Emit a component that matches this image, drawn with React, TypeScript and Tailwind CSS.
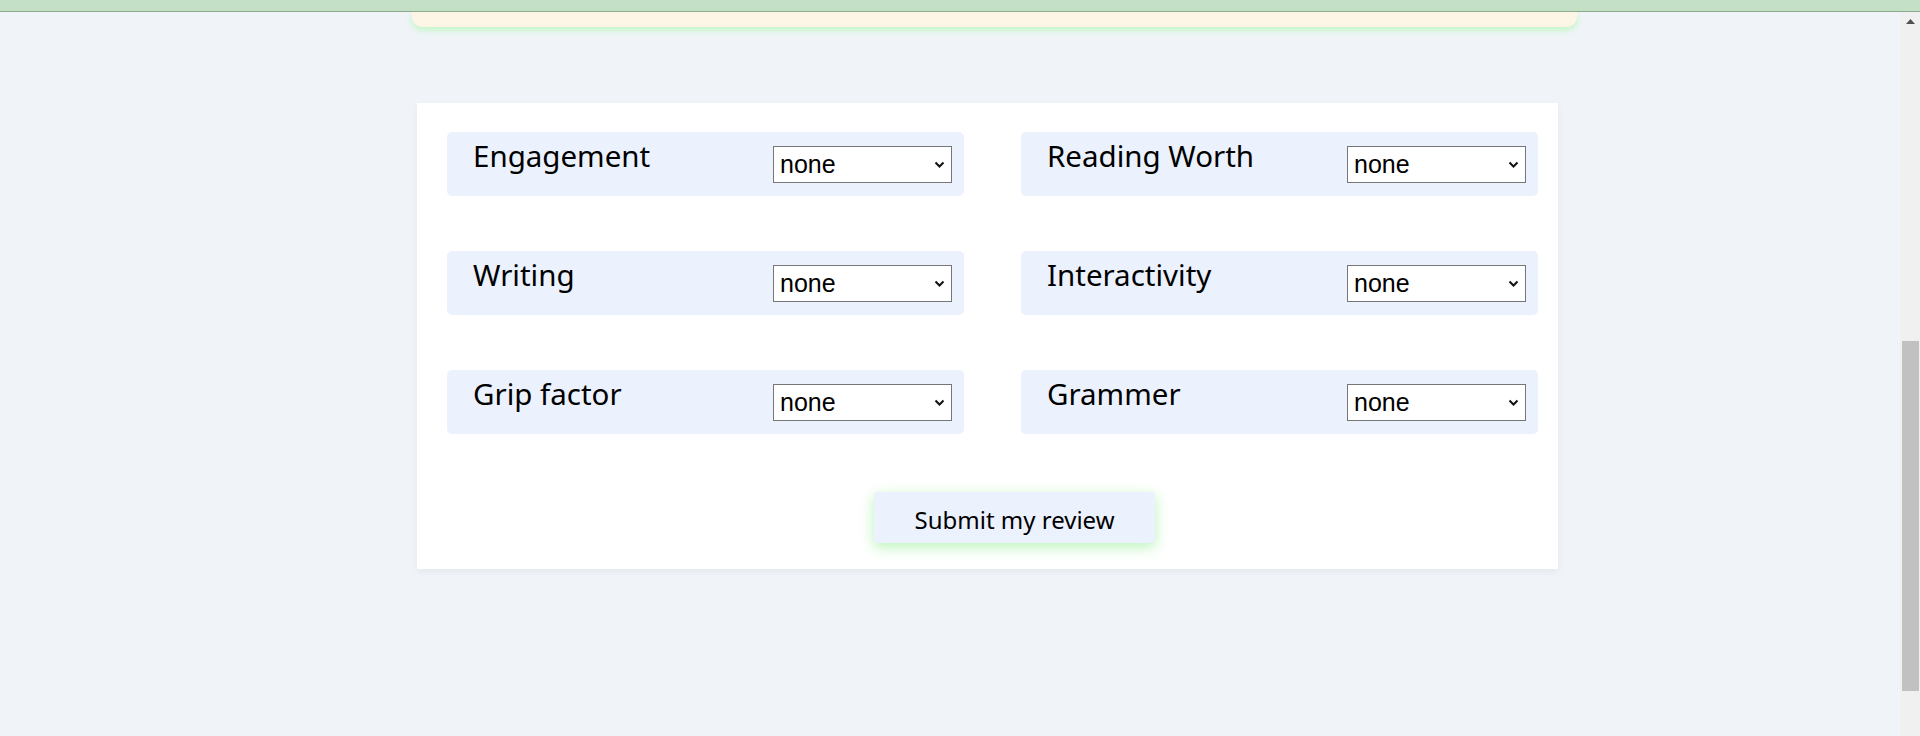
const criteria = [
  "Engagement",
  "Reading Worth",
  "Writing",
  "Interactivity",
  "Grip factor",
  "Grammer",
];

function RatingSelect({ label }: { label: string }) {
  return (
    <div className="flex h-[64px] items-center justify-between rounded-[5px] bg-[#ebf1fd] pl-[26px] pr-[12px]">
      <label className="self-start pt-[9px] font-['Noto_Sans',sans-serif] text-[29.5px] leading-none text-black">
        {label}
      </label>
      <div className="relative h-[37px] w-[179px]">
        <select
          defaultValue="none"
          className="h-full w-full appearance-none border border-[#767676] bg-white pl-[6px] font-['Liberation_Sans',Arial,sans-serif] text-[25px] leading-none text-black outline-none"
        >
          <option value="none">none</option>
          <option value="1">1</option>
          <option value="2">2</option>
          <option value="3">3</option>
          <option value="4">4</option>
          <option value="5">5</option>
        </select>
        <svg
          className="pointer-events-none absolute right-[7px] top-[15px]"
          width="11"
          height="7"
          viewBox="0 0 11 7"
        >
          <path d="M1.5 1.5l4 4 4-4" fill="none" stroke="#111" strokeWidth="2" />
        </svg>
      </div>
    </div>
  );
}

export default function App() {
  return (
    <div className="flex h-[736px] flex-col overflow-hidden bg-[#f0f4f8]">
      {/* header strip */}
      <div className="h-[12px] shrink-0 border-b border-[#8fa68f] bg-[#c4e0c6]" />

      <div className="flex min-h-0 flex-1">
        <main className="flex-1">
          {/* bottom of the card above, scrolled out of view */}
          <div className="ml-[412px] h-[15px] w-[1165px] rounded-b-[10px] bg-[#fdf5e6] shadow-[0_3px_6px_rgba(170,250,170,0.7)]" />

          <section className="ml-[417px] mt-[76px] w-[1141px] bg-white pb-[26px] pl-[30px] pr-[20px] pt-[29px] shadow-[0_3px_8px_rgba(0,0,0,0.05)]">
            <div className="grid grid-cols-[517px_517px] gap-x-[57px] gap-y-[55px]">
              {criteria.map((c) => (
                <RatingSelect key={c} label={c} />
              ))}
            </div>

            <button className="ml-[427px] mt-[58px] flex h-[51px] w-[281px] items-center justify-center rounded-[4px] bg-[#ebf1fd] pt-[5px] font-['Noto_Sans',sans-serif] text-[24px] leading-none text-black shadow-[0_4px_14px_rgba(144,238,144,0.65)]">
              Submit my review
            </button>
          </section>
        </main>

        {/* scrollbar */}
        <div className="flex w-[20px] shrink-0 flex-col bg-[#f0f0f0]">
          <div className="flex h-[19px] items-center justify-center pl-[1px]">
            <svg width="9" height="5" viewBox="0 0 9 5">
              <path d="M4.5 0L9 5H0z" fill="#505050" />
            </svg>
          </div>
          <div className="ml-[2px] mt-[310px] h-[350px] w-[17px] bg-[#c1c1c1]" />
        </div>
      </div>
    </div>
  );
}
